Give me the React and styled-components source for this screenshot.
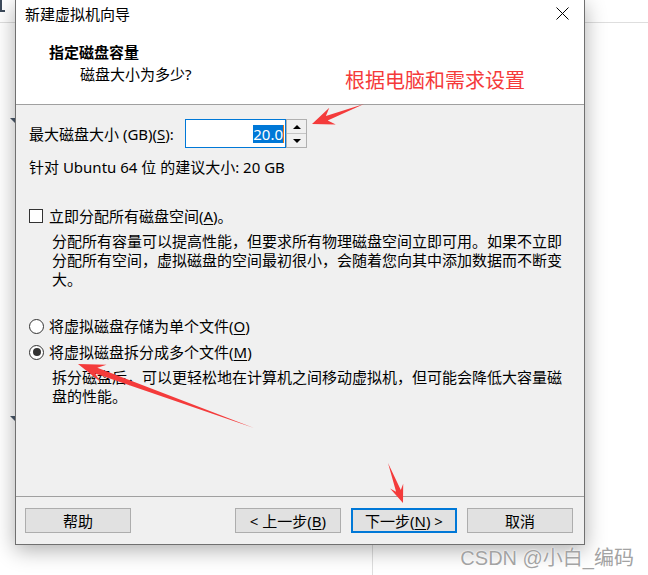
import React from "react";
import styled, { createGlobalStyle } from "styled-components";

const GlobalStyle = createGlobalStyle`
  html, body {
    margin: 0;
    padding: 0;
    background: #fff;
  }
  body {
    font-family: "Noto Sans", "Noto Sans CJK SC", sans-serif;
  }
`;

const Page = styled.div`
  position: relative;
  width: 648px;
  height: 575px;
  overflow: hidden;
  background: #fff;
`;

// desktop bits that sit behind the wizard window
const Desk = styled.div`
  position: absolute;
  inset: 0;
  pointer-events: none;
`;

const DeskLine = styled.div`
  position: absolute;
  background: #dedede;
  ${(p) =>
    p.vertical
      ? `left: ${p.at}px; top: 540px; bottom: 0; width: 1px;`
      : `top: ${p.at}px; left: 0; right: 0; height: 1px;`}
`;

const DeskMarks = styled.svg`
  position: absolute;
  left: 0;
  top: 0;
`;

const Dialog = styled.div`
  position: relative;
  margin-left: 15px;
  width: 570px;
  height: 545px;
  box-sizing: border-box;
  border: 1px solid #707070;
  border-top: none;
  background: #fff;
  display: flex;
  flex-direction: column;
  box-shadow: 0 5px 20px rgba(0, 0, 0, 0.32);
  font-size: 15px;
  line-height: 20px;
  color: #000;
`;

const TitleBar = styled.div`
  height: 30px;
  box-sizing: border-box;
  padding: 4px 15px 0 9px;
  display: flex;
  justify-content: space-between;
  align-items: flex-start;
`;

const CloseIcon = styled.svg`
  margin-top: 3px;
`;

const Header = styled.div`
  height: 75px;
  box-sizing: border-box;
  padding: 12px 0 0 33px;
  border-bottom: 1px solid #a0a0a0;
`;

const StepTitle = styled.div`
  font-weight: 700;
`;

const StepSub = styled.div`
  margin: 2px 0 0 31px;
`;

const Body = styled.div`
  flex: 1;
  background: #f0f0f0;
  padding: 14px 13px 0 13px;
`;

const SizeRow = styled.div`
  display: flex;
  align-items: center;
  height: 29px;
`;

const SizeLabel = styled.span`
  width: 156px;
  flex-shrink: 0;
`;

const NumberBox = styled.div`
  width: 101px;
  height: 29px;
  box-sizing: border-box;
  border: 1px solid #0078d7;
  background: #fff;
  display: flex;
  align-items: center;
  justify-content: flex-end;
  padding-right: 1px;
`;

const Selected = styled.span`
  background: #0078d7;
  color: #fff;
  line-height: 18px;
  border-right: 1px solid #e0761c;
`;

const Spinner = styled.div`
  width: 21px;
  height: 29px;
  box-sizing: border-box;
  border: 1px solid #b0b0b0;
  background: #f0f0f0;
  display: flex;
  flex-direction: column;
`;

const SpinButton = styled.div`
  flex: 1;
  display: flex;
  align-items: center;
  justify-content: center;
  border-bottom: ${(p) => (p.top ? "1px solid #c4c4c4" : "none")};
`;

const Arrow = styled.div`
  width: 0;
  height: 0;
  border-left: 4px solid transparent;
  border-right: 4px solid transparent;
  ${(p) => (p.up ? "border-bottom: 4px solid #000;" : "border-top: 4px solid #000;")}
`;

const Hint = styled.div`
  margin-top: 9px;
`;

const OptionRow = styled.div`
  display: flex;
  align-items: center;
  height: 20px;
  margin-top: ${(p) => p.gap}px;
`;

const CheckBox = styled.span`
  width: 14px;
  height: 14px;
  box-sizing: border-box;
  border: 1px solid #333;
  background: #fff;
  margin-right: 6px;
`;

const Radio = styled.span`
  width: 15px;
  height: 15px;
  box-sizing: border-box;
  border: 1px solid #333;
  border-radius: 50%;
  background: #fff;
  margin-right: 5px;
  display: flex;
  align-items: center;
  justify-content: center;
  &::after {
    content: "";
    display: ${(p) => (p.checked ? "block" : "none")};
    width: 8px;
    height: 8px;
    border-radius: 50%;
    background: #333;
  }
`;

const Para = styled.p`
  margin: 6px 0 0 23px;
  width: 522px;
  line-height: 19px;
`;

const Key = styled.span`
  text-decoration: underline;
  text-underline-offset: 2px;
`;

const Footer = styled.div`
  border-top: 1px solid #a0a0a0;
  background: #f0f0f0;
  padding: 11px 11px 11px 9px;
  display: flex;
  gap: 10px;
`;

const Button = styled.div`
  width: 106px;
  height: 25px;
  box-sizing: border-box;
  background: #e1e1e1;
  border: ${(p) => (p.primary ? "2px solid #0078d7" : "1px solid #adadad")};
  display: flex;
  align-items: center;
  justify-content: center;
  margin-left: ${(p) => (p.pushRight ? "auto" : "0")};
`;

const Note = styled.div`
  position: absolute;
  left: 345px;
  top: 67px;
  font-family: "Noto Sans CJK SC", sans-serif;
  font-size: 20px;
  line-height: 26px;
  color: #f53a3a;
`;

const Overlay = styled.svg`
  position: absolute;
  left: 0;
  top: 0;
  pointer-events: none;
`;

const Watermark = styled.div`
  position: absolute;
  right: 14px;
  bottom: 5px;
  font-family: "Liberation Sans", "Noto Sans CJK SC", sans-serif;
  font-size: 20px;
  line-height: 24px;
  color: #a3a3a3;
  text-shadow: 0 0 2px #fff, 0 0 1px #fff;
`;

// tapered annotation arrow: thin at the tail, barbed head at the tip
function arrowPoints([x1, y1], [x2, y2], headLen, headW, shaftW) {
  const len = Math.hypot(x2 - x1, y2 - y1);
  const ux = (x2 - x1) / len;
  const uy = (y2 - y1) / len;
  const nx = -uy;
  const ny = ux;
  const bx = x2 - ux * headLen;
  const by = y2 - uy * headLen;
  const kx = x2 - ux * headLen * 0.72;
  const ky = y2 - uy * headLen * 0.72;
  const pts = [
    [x1, y1],
    [kx + (nx * shaftW) / 2, ky + (ny * shaftW) / 2],
    [bx + nx * headW, by + ny * headW],
    [x2, y2],
    [bx - nx * headW, by - ny * headW],
    [kx - (nx * shaftW) / 2, ky - (ny * shaftW) / 2],
  ];
  return pts.map((p) => p.map((v) => v.toFixed(1)).join(",")).join(" ");
}

const arrows = [
  { from: [364, 104], to: [312, 124], head: 22, w: 9, shaft: 5 },
  { from: [254, 428], to: [78, 364], head: 27, w: 9, shaft: 6 },
  { from: [388, 463], to: [403, 503], head: 18, w: 7, shaft: 5 },
];

const App = () => {
  return (
    <Page>
      <GlobalStyle />
      <Desk>
        <DeskLine at={22} />
        <DeskLine vertical at={372} />
        <DeskMarks width="15" height="440">
          <path d="M1 0 V11 H5" fill="none" stroke="#3d4b5c" strokeWidth="2" />
          <polygon points="10,118 15,118 15,123" fill="#4a5869" />
          <polygon points="10,416 15,416 15,421" fill="#4a5869" />
        </DeskMarks>
      </Desk>

      <Dialog>
        <TitleBar>
          <span>新建虚拟机向导</span>
          <CloseIcon width="13" height="13" viewBox="0 0 13 13">
            <path d="M0.5 0.5 L12.5 12.5 M12.5 0.5 L0.5 12.5" stroke="#000" strokeWidth="1" />
          </CloseIcon>
        </TitleBar>

        <Header>
          <StepTitle>指定磁盘容量</StepTitle>
          <StepSub>磁盘大小为多少?</StepSub>
        </Header>

        <Body>
          <SizeRow>
            <SizeLabel>
              最大磁盘大小 (GB)(<Key>S</Key>):
            </SizeLabel>
            <NumberBox>
              <Selected>20.0</Selected>
            </NumberBox>
            <Spinner>
              <SpinButton top>
                <Arrow up />
              </SpinButton>
              <SpinButton>
                <Arrow />
              </SpinButton>
            </Spinner>
          </SizeRow>

          <Hint>针对 Ubuntu 64 位 的建议大小: 20 GB</Hint>

          <OptionRow gap={29}>
            <CheckBox />
            <span>
              立即分配所有磁盘空间(<Key>A</Key>)。
            </span>
          </OptionRow>
          <Para>
            分配所有容量可以提高性能，但要求所有物理磁盘空间立即可用。如果不立即分配所有空间，虚拟磁盘的空间最初很小，会随着您向其中添加数据而不断变大。
          </Para>

          <OptionRow gap={27}>
            <Radio />
            <span>
              将虚拟磁盘存储为单个文件(<Key>O</Key>)
            </span>
          </OptionRow>
          <OptionRow gap={6}>
            <Radio checked />
            <span>
              将虚拟磁盘拆分成多个文件(<Key>M</Key>)
            </span>
          </OptionRow>
          <Para>
            拆分磁盘后，可以更轻松地在计算机之间移动虚拟机，但可能会降低大容量磁盘的性能。
          </Para>
        </Body>

        <Footer>
          <Button>帮助</Button>
          <Button pushRight>
            &lt; 上一步(<Key>B</Key>)
          </Button>
          <Button primary>
            下一步(<Key>N</Key>) &gt;
          </Button>
          <Button>取消</Button>
        </Footer>
      </Dialog>

      <Note>根据电脑和需求设置</Note>

      <Overlay width="648" height="575">
        {arrows.map((a, i) => (
          <polygon
            key={i}
            points={arrowPoints(a.from, a.to, a.head, a.w, a.shaft)}
            fill="#f43b3b"
          />
        ))}
      </Overlay>

      <Watermark>CSDN @小白_编码</Watermark>
    </Page>
  );
};

export default App;
